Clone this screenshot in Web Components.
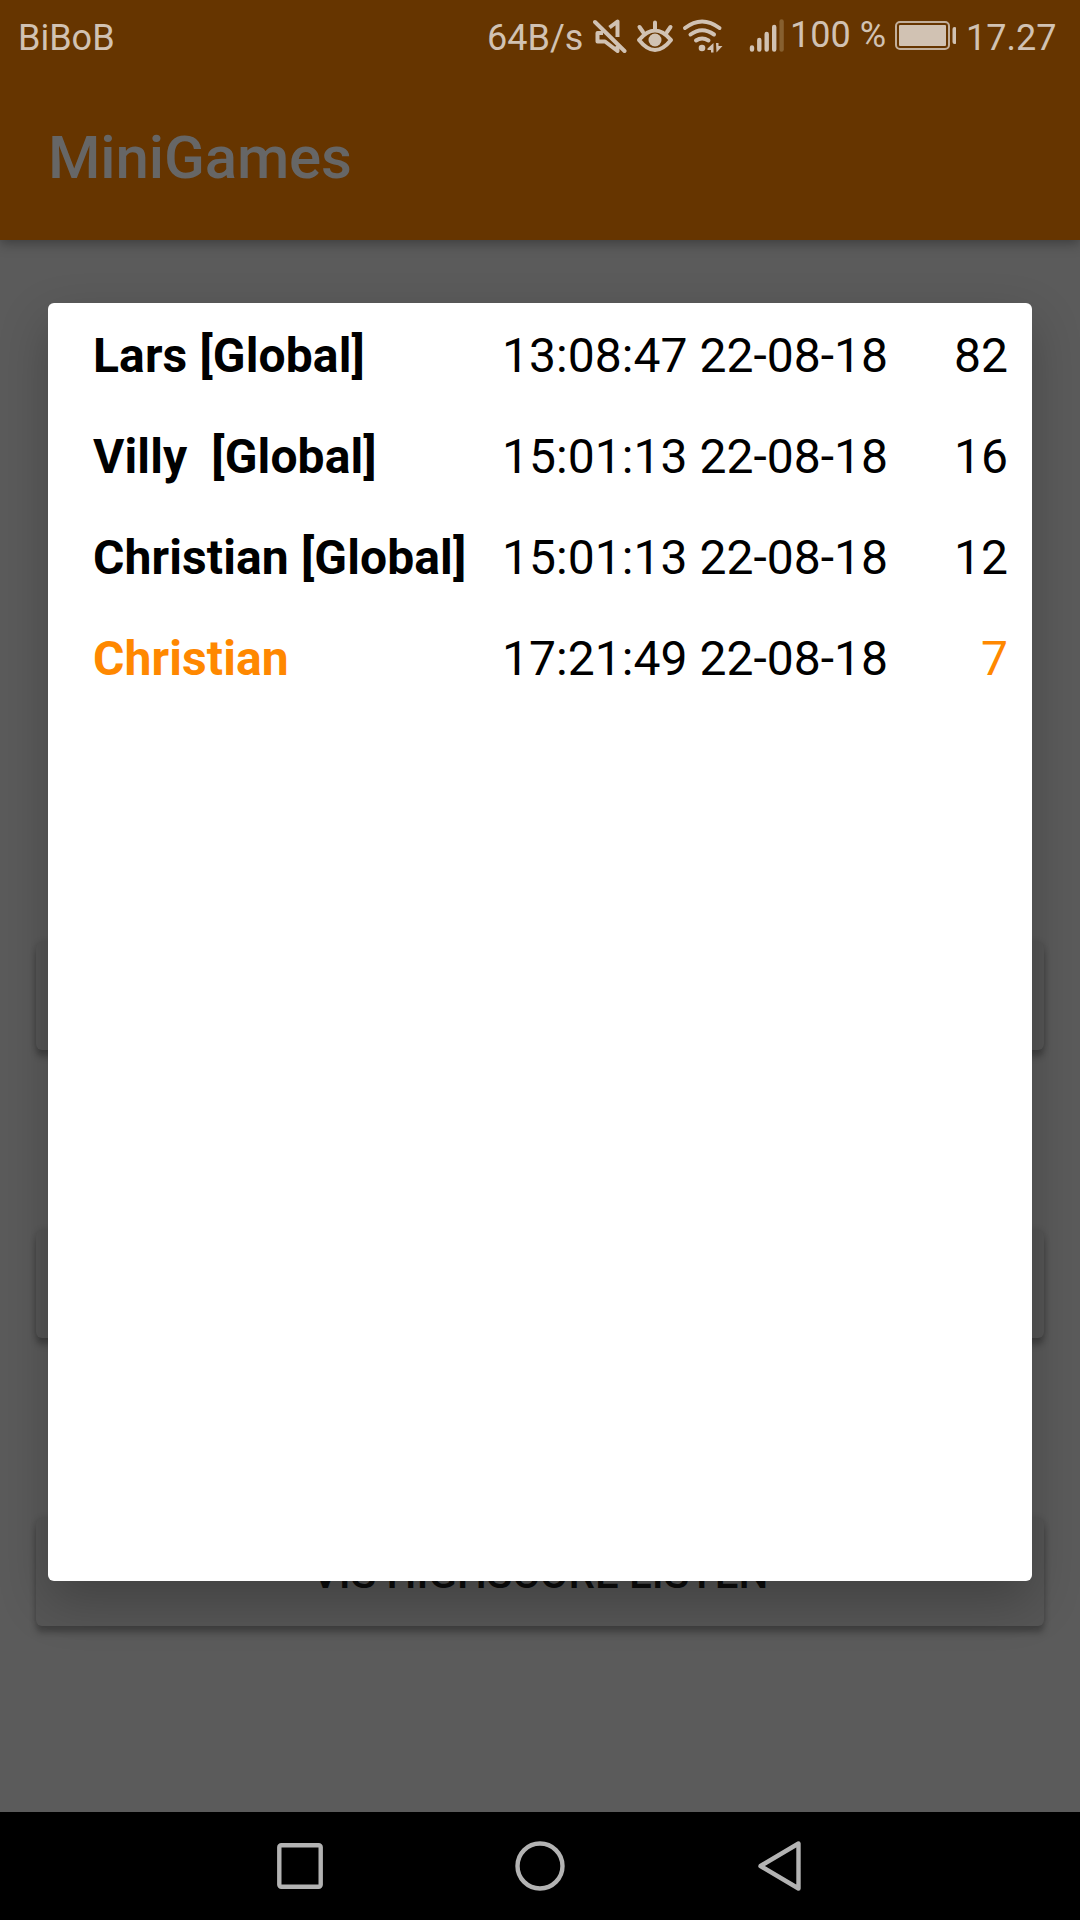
<!DOCTYPE html>
<html lang="da">
<head>
<meta charset="utf-8">
<title>MiniGames</title>
<style>
html,body{margin:0;height:1920px;width:1080px;overflow:hidden;background:#5c5c5c;font-family:Roboto,sans-serif}
</style>
</head>
<body>
<mini-games-screen></mini-games-screen>
<script>
const define = (name, html) => customElements.define(name, class extends HTMLElement {
  constructor() {
    super();
    this.attachShadow({mode: 'open'}).innerHTML = html;
  }
});

define('status-bar', `
<style>
:host{display:flex;height:72px;color:#d1c2b3;font-size:36px;line-height:42px;white-space:pre}
span,svg{display:block;flex:none}
span{margin-top:17px}
.carrier{margin-left:18px;width:469px}
.speed{width:106px}
.pct{margin-top:14px;width:105px;margin-left:4px}
.time{margin-left:10px}
svg{height:72px;fill:none;stroke:#d1c2b3;stroke-width:4;stroke-linecap:round;stroke-linejoin:round}
.f{fill:#d1c2b3;stroke:none}
</style>
<span class="carrier">BiBoB</span>
<span class="speed">64B/s</span>
<svg width="42" viewBox="593 0 42 72"><path d="M595 22L624.500 51"/><path d="M609.500 27.500L617.500 21.500V37M603 33H597.500V41.500H605L617.500 51V46" stroke-linecap="butt"/></svg>
<svg width="46" viewBox="635 0 46 72"><path d="M639 40Q655 21 671 40Q655 60 639 40ZM655 22.500V29M639.500 27L643 32M670.500 27L667 32"/><circle class="f" cx="655" cy="40" r="6.500"/></svg>
<svg width="66" viewBox="681 0 66 72"><path d="M685 28Q702 15 719.500 28M690.500 34.500Q702 26 714 34.500M696 40.500Q702 36.500 708.500 40.500"/><circle class="f" cx="702" cy="48" r="3.300"/><path class="f" d="M707.500 48.500L713.500 43V52.500H711V50H707.500ZM716 43H718.500V46H722.500L716.500 52.500Z"/></svg>
<svg width="39" viewBox="747 0 39 72"><path d="M752 47.500V49.500M759.300 40V49.500M766.700 34V49.500M774.200 27V49.500" stroke-width="4.400"/><path d="M781.600 21.500V49.500" stroke="#87602f" stroke-width="4.400"/></svg>
<span class="pct">100 %</span>
<svg width="61" viewBox="894 0 61 72"><rect x="895" y="22" width="53" height="27" rx="4" stroke-width="2" stroke="#c2af9c"/><rect class="f" x="898" y="25" width="47" height="21" rx="1"/><path d="M953.500 29V42" stroke-width="4"/></svg>
<span class="time">17.27</span>`);

define('app-bar', `
<style>
:host{display:block;height:240px;background:#663500;box-shadow:0 3px 12px rgba(0,0,0,.35);color:#666}
h1{margin:0;padding:51px 0 0 48px;font:500 60px/70px Roboto,sans-serif;letter-spacing:-.12px}
</style>
<status-bar></status-bar><h1><slot></slot></h1>`);

define('raised-button', `
<style>
:host{display:flex;height:108px;border-radius:6px;background:#565656;box-shadow:0 7px 6px rgba(0,0,0,.25),0 0 6px rgba(0,0,0,.13);align-items:center;justify-content:center;color:#0c0c0c;font:500 42px/49px Roboto,sans-serif}
span{padding-top:2px}
</style><span><slot></slot></span>`);

define('score-row', `
<style>
:host{display:grid;grid-template-columns:409px 1fr auto;height:101px;font-size:48px;line-height:56px;color:#000;white-space:pre}
.name{font-weight:700;letter-spacing:.12px}
.date{letter-spacing:.04px}
:host([current]) .name,:host([current]) .score{color:#ff8800}
</style>
<span class="name"><slot name="name"></slot></span><span class="date"><slot name="date"></slot></span><span class="score"><slot></slot></span>`);

define('score-dialog', `
<style>
:host{display:block;box-sizing:border-box;width:984px;height:1278px;padding:25px 24px 0 45px;border-radius:6px;background:#fff;box-shadow:0 20px 50px rgba(0,0,0,.24)}
</style><slot></slot>`);

define('nav-bar', `
<style>
:host{display:flex;height:108px;background:#000;justify-content:center;align-items:center;gap:180px}
svg{width:60px;height:60px;fill:none;stroke:#b3b3b3;stroke-width:4.400;stroke-linejoin:round}
</style>
<svg viewBox="0 0 60 60"><rect x="9.300" y="9.300" width="41.400" height="41.400" rx="2"/></svg>
<svg viewBox="0 0 60 60"><circle cx="30" cy="30" r="22.500"/></svg>
<svg viewBox="0 0 60 60"><path d="M10.500 30L48.500 7.500V52.500Z"/></svg>`);

define('mini-games-screen', `
<style>
:host{display:flex;flex-direction:column;position:relative;width:1080px;height:1920px;background:#5b5b5b;overflow:hidden}
main{flex:1;display:flex;flex-direction:column;gap:180px;padding:702px 36px 0}
score-dialog{position:absolute;left:48px;top:303px}
nav-bar{position:relative}
</style>
<app-bar>MiniGames</app-bar>
<main><raised-button></raised-button><raised-button></raised-button><raised-button>VIS HIGHSCORE LISTEN</raised-button></main>
<nav-bar></nav-bar>
<score-dialog>
<score-row><span slot="name">Lars [Global]</span><span slot="date">13:08:47 22-08-18</span>82</score-row>
<score-row><span slot="name">Villy  [Global]</span><span slot="date">15:01:13 22-08-18</span>16</score-row>
<score-row><span slot="name">Christian [Global]</span><span slot="date">15:01:13 22-08-18</span>12</score-row>
<score-row current><span slot="name">Christian</span><span slot="date">17:21:49 22-08-18</span>7</score-row>
</score-dialog>`);
</script>
</body>
</html>
